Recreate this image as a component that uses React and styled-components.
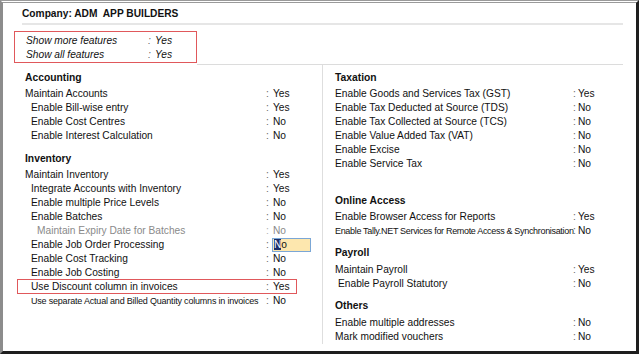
import React from "react";
import styled, { createGlobalStyle } from "styled-components";

const GlobalStyle = createGlobalStyle`
  html, body {
    margin: 0;
    padding: 0;
    background: #ffffff;
  }
  body {
    font-family: "Liberation Sans", Arial, sans-serif;
    color: #111111;
  }
`;

const Frame = styled.div`
  box-sizing: border-box;
  width: 639px;
  height: 354px;
  border-top: 3px double #9a9a9a;
  border-left: 3px solid #8c8c8c;
  border-right: 3px solid #1e1e1e;
  border-bottom: 3px solid #1e1e1e;
  padding: 0 13px 0 11px;
  overflow: hidden;
`;

const Title = styled.div`
  margin-left: 8px;
  height: 22px;
  padding-top: 4px;
  box-sizing: border-box;
  line-height: 14px;
  font-size: 10.2px;
  font-weight: bold;
  white-space: pre;
  border-bottom: 2px solid #e6e6e6;
`;

const FeaturesRow = styled.div`
  display: flex;
  align-items: flex-end;
  margin-top: 6px;
`;

const FeatureBox = styled.div`
  width: 183px;
  height: 32px;
  box-sizing: border-box;
  border: 1px solid #e0585b;
  padding: 2px 0 0 11px;
`;

const Rule = styled.div`
  flex: 1;
  border-bottom: 1px solid #dcdcdc;
  margin-bottom: -2px;
`;

const Columns = styled.div`
  display: grid;
  grid-template-columns: 308px 1fr;
  margin-top: 2px;
  height: 279px;
`;

const Column = styled.div`
  padding: 6px 0 0 ${(p) => p.$pad}px;
  border-left: ${(p) => (p.$divider ? "1px solid #dedede" : "none")};
  margin-bottom: 9px;
`;

const Heading = styled.div`
  height: 14px;
  line-height: 14px;
  font-size: 10.3px;
  font-weight: bold;
  margin-top: ${(p) => p.$gap || 0}px;
  margin-bottom: ${(p) => p.$after || 2}px;
`;

const Row = styled.div`
  display: flex;
  height: 14px;
  line-height: 14px;
  font-size: 10.2px;
  white-space: nowrap;
  color: ${(p) => (p.$muted ? "#8a8a8a" : "#111111")};
  font-style: ${(p) => (p.$italic ? "italic" : "normal")};
`;

const Label = styled.span`
  width: ${(p) => p.$width}px;
  padding-left: ${(p) => p.$indent || 0}px;
  box-sizing: border-box;
  flex: none;
  font-size: ${(p) => (p.$tight !== undefined ? "9px" : "inherit")};
  letter-spacing: ${(p) => (p.$tight !== undefined ? `${p.$tight}px` : "normal")};
`;

const Colon = styled.span`
  width: ${(p) => p.$width || 7}px;
  flex: none;
  color: ${(p) => (p.$muted ? "#b0b0b0" : "#666666")};
`;

const Value = styled.span`
  flex: none;
`;

const EditBox = styled.span`
  display: inline-block;
  width: 39px;
  height: 14px;
  box-sizing: border-box;
  margin-left: -1px;
  background: #fde7ae;
  border: 1px solid #7ba7d6;
  line-height: 12px;
  padding-left: 1px;
`;

const Caret = styled.span`
  background: #1c2f6b;
  color: #ffffff;
`;

const Marked = styled.div`
  margin-left: -8px;
  padding-left: 7px;
  width: 280px;
  box-sizing: border-box;
  border: 1px solid #e0585b;
  height: 15px;
  margin-top: -1px;
  & > div {
    height: 13px;
    line-height: 13px;
  }
`;

function Item({ label, value, width, indent, muted, tight, edit, colon }) {
  return (
    <Row $muted={muted}>
      <Label $width={width} $indent={indent} $tight={tight}>
        {label}
      </Label>
      <Colon $muted={muted} $width={colon}>:</Colon>
      {edit ? (
        <EditBox>
          <Caret>N</Caret>o
        </EditBox>
      ) : (
        <Value>{value}</Value>
      )}
    </Row>
  );
}

const L = 241;
const R = 238;

function RightItem(props) {
  return <Item width={R} colon={5} {...props} />;
}

export default function App() {
  return (
    <>
      <GlobalStyle />
      <Frame>
        <Title>Company: ADM  APP BUILDERS</Title>
        <FeaturesRow>
          <FeatureBox>
            <Row $italic>
              <Label $width={122}>Show more features</Label>
              <Colon>:</Colon>
              <Value>Yes</Value>
            </Row>
            <Row $italic>
              <Label $width={122}>Show all features</Label>
              <Colon>:</Colon>
              <Value>Yes</Value>
            </Row>
          </FeatureBox>
          <Rule />
        </FeaturesRow>
        <Columns>
          <Column $pad={11}>
            <Heading>Accounting</Heading>
            <Item width={L} label="Maintain Accounts" value="Yes" />
            <Item width={L} indent={6} label="Enable Bill-wise entry" value="Yes" />
            <Item width={L} indent={6} label="Enable Cost Centres" value="No" />
            <Item width={L} indent={6} label="Enable Interest Calculation" value="No" />

            <Heading $gap={9}>Inventory</Heading>
            <Item width={L} label="Maintain Inventory" value="Yes" />
            <Item width={L} indent={6} label="Integrate Accounts with Inventory" value="Yes" />
            <Item width={L} indent={6} label="Enable multiple Price Levels" value="No" />
            <Item width={L} indent={6} label="Enable Batches" value="No" />
            <Item width={L} indent={12} muted label="Maintain Expiry Date for Batches" value="No" />
            <Item width={L} indent={6} label="Enable Job Order Processing" edit />
            <Item width={L} indent={6} label="Enable Cost Tracking" value="No" />
            <Item width={L} indent={6} label="Enable Job Costing" value="No" />
            <Marked>
              <Item width={L} indent={6} label="Use Discount column in invoices" value="Yes" />
            </Marked>
            <Item
              width={L}
              indent={6}
              tight={-0.2}
              label="Use separate Actual and Billed Quantity columns in invoices"
              value="No"
            />
          </Column>

          <Column $pad={12} $divider>
            <Heading>Taxation</Heading>
            <RightItem label="Enable Goods and Services Tax (GST)" value="Yes" />
            <RightItem label="Enable Tax Deducted at Source (TDS)" value="No" />
            <RightItem label="Enable Tax Collected at Source (TCS)" value="No" />
            <RightItem label="Enable Value Added Tax (VAT)" value="No" />
            <RightItem label="Enable Excise" value="No" />
            <RightItem label="Enable Service Tax" value="No" />

            <Heading $gap={23}>Online Access</Heading>
            <RightItem label="Enable Browser Access for Reports" value="Yes" />
            <RightItem
              tight={-0.32}
              label="Enable Tally.NET Services for Remote Access & Synchronisation"
              value="No"
            />

            <Heading $gap={8} $after={3}>Payroll</Heading>
            <RightItem label="Maintain Payroll" value="Yes" />
            <RightItem indent={3} label="Enable Payroll Statutory" value="No" />

            <Heading $gap={8} $after={3}>Others</Heading>
            <RightItem label="Enable multiple addresses" value="No" />
            <RightItem label="Mark modified vouchers" value="No" />
          </Column>
        </Columns>
      </Frame>
    </>
  );
}
